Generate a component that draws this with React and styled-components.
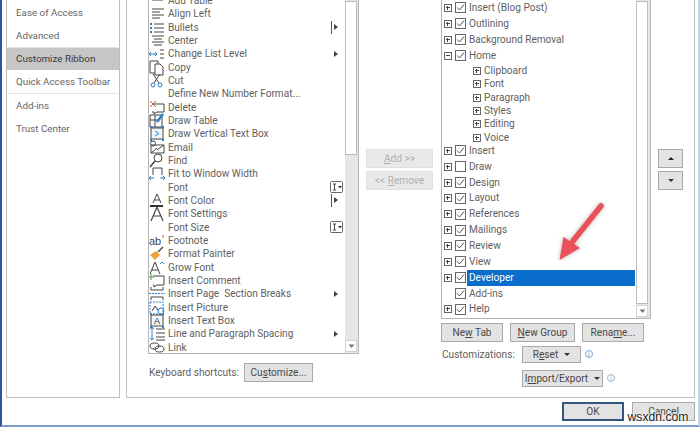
import React from 'react';
import styled, { createGlobalStyle } from 'styled-components';

const Global = createGlobalStyle`
  html, body { margin: 0; padding: 0; background: #fff; }
  * { box-sizing: border-box; }
`;

const Frame = styled.div`
  position: relative;
  width: 700px;
  height: 427px;
  overflow: hidden;
  background: #fff;
  border-left: 2px solid #2b579a;
  border-right: 2px solid #c5d6ea;
  border-bottom: 2px solid #7f9cc9;
  font-family: Roboto, "Open Sans", sans-serif;
  font-size: 10.1px;
  color: #5f5f5f;
  display: flex;
  flex-direction: column;
`;

const Body = styled.div`
  display: flex;
  gap: 6px;
  height: 399px;
  margin-top: -1px;
  padding-left: 4px;
  padding-right: 3px;
  flex: none;
`;

const Sidebar = styled.nav`
  width: 114px;
  flex: none;
  border: 1px solid #bdbdbd;
  display: flex;
  flex-direction: column;
  padding-top: 1px;
  font-size: 9.8px;
`;

const NavItem = styled.div`
  height: ${p => p.$h || 23}px;
  line-height: ${p => p.$h || 23}px;
  padding-left: 9px;
  background: ${p => (p.$active ? '#c6c6c6' : 'transparent')};
  color: ${p => (p.$active ? '#3a3a3a' : '#666')};
`;

const NavRule = styled.div`
  height: 1px;
  margin: 0 1px;
  background: #e4e4e4;
`;

const Main = styled.section`
  flex: 1;
  border: 1px solid #bdbdbd;
  display: flex;
  padding-left: 21px;
`;

const LeftCol = styled.div`
  width: 211px;
  flex: none;
  display: flex;
  flex-direction: column;
`;

const ListBox = styled.div`
  position: relative;
  border: 1px solid #b4b4b4;
  border-top: 0;
  display: flex;
  overflow: hidden;
  background: #fff;
  height: ${p => p.$h}px;
`;

const Rows = styled.div`
  flex: 1;
  min-width: 0;
  margin-top: ${p => p.$top}px;
`;

const CmdRow = styled.div`
  position: relative;
  height: 13.33px;
  line-height: 13.33px;
  padding-left: 19px;
  white-space: pre;
`;

const CmdIcon = styled.svg`
  position: absolute;
  left: 0;
  top: -1px;
  width: 16px;
  height: 15px;
  overflow: visible;
`;

const Marker = styled.span`
  position: absolute;
  right: 2px;
  top: 0;
  height: 13px;
  display: flex;
  align-items: center;
`;

const Scroll = styled.div`
  width: ${p => p.$w}px;
  flex: none;
  padding-top: 1px;
  padding-right: ${p => p.$w - 12}px;
  background: #e6e6e6;
  display: flex;
  flex-direction: column;
`;

const Thumb = styled.div`
  flex: ${p => (p.$grow ? 1 : 'none')};
  height: ${p => p.$h}px;
  background: #fff;
  border: 1px solid #bcbcbc;
`;

const ScrollFill = styled.div`
  flex: 1;
`;

const ScrollBtn = styled.div`
  height: 12px;
  margin: 1px 0;
  background: #fff;
  border: 1px solid #d2d2d2;
  display: flex;
  align-items: center;
  justify-content: center;
  flex: none;
`;

const KeyRow = styled.div`
  display: flex;
  align-items: center;
  margin-top: 9px;
`;

const KeyLabel = styled.span`
  width: 96px;
  padding-left: 1px;
  flex: none;
`;

const Btn = styled.div`
  height: ${p => p.$h || 19}px;
  width: ${p => p.$w}px;
  flex: none;
  background: ${p => (p.$disabled ? '#e9e9e9' : '#e3e3e3')};
  border-style: solid;
  border-color: ${p => (p.$disabled ? '#e0e0e0' : p.$primary ? '#33567f' : '#a9a9a9')};
  border-width: ${p => (p.$primary ? 2 : 1)}px;
  color: ${p => (p.$disabled ? '#b0b0b0' : '#484848')};
  display: flex;
  align-items: center;
  justify-content: center;
  gap: 6px;
  white-space: pre;
  u { text-underline-offset: 1px; }
`;

const MidCol = styled.div`
  width: 67px;
  margin-left: 7px;
  flex: none;
  padding-top: 149px;
  display: flex;
  flex-direction: column;
  gap: 3px;
`;

const RightCol = styled.div`
  width: 210px;
  margin-left: 8px;
  flex: none;
  display: flex;
  flex-direction: column;
`;

const TreeRow = styled.div`
  position: relative;
  height: ${p => (p.$sub ? 13.33 : 15.87)}px;
  margin-top: ${p => (p.$first ? 1 : 0)}px;
  margin-bottom: ${p => (p.$last ? -1.5 : 0)}px;
  display: flex;
  align-items: center;
  padding-left: ${p => (p.$sub ? 31 : 2)}px;
  gap: 3px;
`;

const Expander = styled.span`
  width: 8px;
  height: 8px;
  flex: none;
  border: 1px solid #666;
  position: relative;
  visibility: ${p => (p.$none ? 'hidden' : 'visible')};
  &::before {
    content: '';
    position: absolute;
    left: 1px; right: 1px; top: 2px; height: 1px;
    background: #444;
  }
  &::after {
    content: '';
    display: ${p => (p.$open ? 'none' : 'block')};
    position: absolute;
    top: 1px; bottom: 1px; left: 2px; width: 1px;
    background: #444;
  }
`;

const Check = styled.span`
  width: 11px;
  height: 11px;
  flex: none;
  border: 1px solid #666;
  background: #fff;
  display: flex;
  align-items: center;
  justify-content: center;
  position: relative;
  z-index: 1;
`;

const Label = styled.span`
  height: 16px;
  line-height: 16px;
  margin-left: -2px;
  padding-left: 2px;
  flex: ${p => (p.$sel ? 1 : 'none')};
  background: ${p => (p.$sel ? '#0a6ccb' : 'transparent')};
  color: ${p => (p.$sel ? '#fff' : 'inherit')};
  margin-right: ${p => (p.$sel ? 1 : 0)}px;
`;

const TabButtons = styled.div`
  display: flex;
  margin-top: 4px;
  gap: 7px;
`;

const CustomRow = styled.div`
  display: flex;
  align-items: center;
  height: 17px;
  margin-top: ${p => p.$mt}px;
`;

const CustomLabel = styled.span`
  width: 81px;
  padding-left: 1px;
  flex: none;
`;

const InfoIcon = styled.svg`
  width: 8px;
  height: 8px;
  margin-left: 4px;
  margin-top: -1px;
  flex: none;
`;

const Caret = styled.span`
  width: 0;
  height: 0;
  border-left: 3px solid transparent;
  border-right: 3px solid transparent;
  border-top: 3px solid #333;
`;

const UpTri = styled.span`
  width: 0;
  height: 0;
  border-left: 3px solid transparent;
  border-right: 3px solid transparent;
  border-bottom: 3px solid #222;
`;

const Side = styled.div`
  margin-left: 7px;
  width: 25px;
  flex: none;
  padding-top: 149px;
  display: flex;
  flex-direction: column;
  gap: 3px;
`;

const Footer = styled.footer`
  display: flex;
  justify-content: flex-end;
  gap: 8px;
  padding-right: 3px;
  margin-top: 4px;
`;

const Watermark = styled.span`
  position: absolute;
  left: 625.5px;
  top: 409px;
  font-family: "Liberation Sans", sans-serif;
  font-size: 12.2px;
  line-height: 16px;
  color: #1c1c1c;
  text-shadow: 0 0 2px #fff, 0 0 2px #fff, 0 0 3px #fff;
`;

const Arrow = styled.svg`
  position: absolute;
  left: 548px;
  top: 195px;
  width: 60px;
  height: 72px;
  pointer-events: none;
  overflow: visible;
  filter: drop-shadow(0 0 2px rgba(0, 0, 0, 0.3));
`;

const blue = '#2f7fc9';
const d = '#444';
const icons = {
  table: <g stroke={d} fill="none"><path d="M3 -3h11v10H3zM3 3h11M7 -3v10M10.500 -3v10" /></g>,
  left: <g stroke={d}><path d="M3 3h12M3 6h8M3 9h12M3 12h8" /></g>,
  bullets: <g stroke={d}><path d="M5 4h10M5 8h10M5 12h10" /><path stroke={blue} strokeWidth="2" d="M1 4h2M1 8h2M1 12h2" /></g>,
  center: <g stroke={d}><path d="M3 3h12M5 6h8M3 9h12M5 12h8" /></g>,
  level: <g><path stroke={d} d="M11 8h4M11 4h4M11 12h4" /><path stroke={blue} fill="none" d="M0 8h8M2 6l-2 2 2 2M6 6l2 2-2 2" /></g>,
  copy: <g stroke={d} fill="#fff"><path d="M1 1h8v12H1z" /><path d="M6 4h5l3 3v8H6z" /></g>,
  cut: <g fill="none"><path stroke={d} d="M4 1l6 9M11 1l-6 9" /><circle cx="4" cy="12" r="2" stroke={blue} /><circle cx="11" cy="12" r="2" stroke={blue} /></g>,
  del: <g fill="none"><path stroke={d} d="M3 4h12v8H8l-3 2v-2H3" /><path stroke="#e0504a" d="M1 1l6 6M7 1l-6 6" /></g>,
  drawTable: <g fill="none"><path stroke={d} d="M1 2h12v12H1zM1 7h8M6 2v12" /><path stroke={blue} strokeWidth="2.500" d="M8 9l6-8" /></g>,
  vert: <g fill="none"><path stroke={d} d="M2 2h12v11H2z" fill="#eef5fb" /><path stroke={blue} d="M6 5l4 2.500-4 2.500" /><path stroke={blue} strokeWidth="2" d="M1 1h2M13 1h2M1 14h2M13 14h2" /></g>,
  email: <g fill="none" stroke={d}><path d="M2 5h13v8H2zM2 13l6-5M15 5l-7 5" /><circle cx="4" cy="3.500" r="2.500" /></g>,
  find: <g fill="none" stroke={d}><circle cx="9" cy="5" r="4" /><path strokeWidth="1.500" d="M6 8l-5 6" /></g>,
  fit: <g fill="none"><path stroke={d} d="M4 9V2h9v7" /><path stroke={blue} d="M0 12h5M2 10l-2 2 2 2M11 12h5M14 10l2 2-2 2" /></g>,
  fontColor: <g><path stroke={d} fill="none" d="M4 10l4-9 4 9M5.500 7h5" /><path stroke="#333" strokeWidth="2" d="M1 13h13" /></g>,
  fontSet: <g><path stroke={d} strokeWidth="1.200" fill="none" d="M2 15L8 1l6 14M4 10h8" /></g>,
  ab: <g><text x="0" y="12" fontSize="11" fontFamily="Liberation Sans" fill="#444">ab</text><path stroke="#d9534f" d="M14 2v3" /></g>,
  painter: <g><path fill="#eba33e" d="M1 9l6-4 4 4-5 5z" /><path stroke={d} strokeWidth="1.500" d="M9 6l5-5" /></g>,
  grow: <g><path stroke={d} fill="none" d="M1 14L6 2l5 12M3 10h6" /><path stroke={blue} fill="none" d="M11 4l2-2 2 2" /></g>,
  comment: <g fill="none"><path stroke={d} d="M4 3h11v9H8l-3 2v-2H4" /><path stroke="#4a9a4a" d="M2 1v6M-1 4h6" /></g>,
  page: <g fill="none"><path stroke={d} d="M2 1v3h12V1M2 14v-3h12v3" /><path stroke={blue} strokeDasharray="2 1" d="M0 7.500h16" /></g>,
  picture: <g fill="none"><path stroke={blue} strokeDasharray="2 1" d="M1 2h13v12H1z" /><path stroke={d} d="M3 11l3-5 3 4" /><circle cx="12" cy="11" r="3" stroke={blue} /></g>,
  textBox: <g fill="none"><path stroke={d} d="M2 2h12v11H2z" fill="#eef5fb" /><text x="5" y="11" fontSize="9" fontFamily="Liberation Sans" fill="#333">A</text><path stroke={blue} strokeWidth="2" d="M1 1h2M13 1h2M1 14h2M13 14h2" /></g>,
  spacing: <g fill="none"><path stroke={d} d="M7 3h9M7 7h9M7 11h9M7 14h9" /><path stroke={blue} d="M3 1v13M1 3l2-2 2 2M1 12l2 2 2-2" /></g>,
  link: <g fill="none" stroke={d}><ellipse cx="5.500" cy="6" rx="4.500" ry="3" /><ellipse cx="10.500" cy="9" rx="4.500" ry="3" /></g>,
};

const commands = [
  ['Add Table', 'table'], ['Align Left', 'left'], ['Bullets', 'bullets', 'bar'], ['Center', 'center'],
  ['Change List Level', 'level', 'tri'], ['Copy', 'copy'], ['Cut', 'cut'], ['Define New Number Format...'],
  ['Delete', 'del'], ['Draw Table', 'drawTable'], ['Draw Vertical Text Box', 'vert'], ['Email', 'email'],
  ['Find', 'find'], ['Fit to Window Width', 'fit'], ['Font', null, 'combo'], ['Font Color', 'fontColor', 'bar'],
  ['Font Settings', 'fontSet'], ['Font Size', null, 'combo'], ['Footnote', 'ab'], ['Format Painter', 'painter'],
  ['Grow Font', 'grow'], ['Insert Comment', 'comment'], ['Insert Page  Section Breaks', 'page', 'tri'],
  ['Insert Picture', 'picture'], ['Insert Text Box', 'textBox'], ['Line and Paragraph Spacing', 'spacing', 'tri'], ['Link', 'link'],
];

const Combo = () => (
  <svg width="13" height="12" viewBox="0 0 13 12">
    <rect x="0.500" y="0.500" width="12" height="11" rx="1" fill="#fff" stroke="#666" />
    <path d="M3 3h3M3 9h3M4.500 3v6" stroke="#444" fill="none" />
    <path d="M8 5h4l-2 2.500z" fill="#333" />
  </svg>
);
const Tri = () => (
  <svg width="13" height="12" viewBox="0 0 13 12"><path d="M4 3l4 3-4 3z" fill="#444" /></svg>
);
const BarTri = () => (
  <svg width="13" height="13" viewBox="0 0 13 13"><path d="M1.500 0v13" stroke="#555" /><path d="M4 3l4 3-4 3z" fill="#444" /></svg>
);
const Tick = () => (
  <svg width="9" height="9" viewBox="0 0 9 9"><path d="M1 4.500l2.500 2.500L8 1.500" fill="none" stroke="#555" /></svg>
);
const Down = () => (
  <svg width="7" height="5" viewBox="0 0 7 5"><path d="M0.500 0.500h6L3.500 4z" fill="#777" /></svg>
);
const Info = ({ color }) => (
  <InfoIcon viewBox="0 0 8 8">
    <circle cx="4" cy="4" r="3.500" fill="none" stroke={color} />
    <path d="M4 3.500v3M4 1.500v1" stroke={color} />
  </InfoIcon>
);

const tree = [
  ['Insert (Blog Post)'], ['Outlining'], ['Background Removal'], ['Home', { open: true }],
  ['Clipboard', { sub: true, first: true }], ['Font', { sub: true }], ['Paragraph', { sub: true }], ['Styles', { sub: true }],
  ['Editing', { sub: true }], ['Voice', { sub: true, last: true }], ['Insert'], ['Draw', { off: true }], ['Design'], ['Layout'],
  ['References'], ['Mailings'], ['Review'], ['View'], ['Developer', { sel: true }], ['Add-ins', { none: true }], ['Help'],
];

export default function App() {
  return (
    <>
      <Global />
      <Frame>
        <Body>
          <Sidebar>
            <NavItem>Ease of Access</NavItem>
            <NavItem>Advanced</NavItem>
            <NavRule />
            <NavItem $active $h={22}>Customize Ribbon</NavItem>
            <NavItem>Quick Access Toolbar</NavItem>
            <NavRule />
            <NavItem>Add-ins</NavItem>
            <NavItem>Trust Center</NavItem>
          </Sidebar>
          <Main>
            <LeftCol>
              <ListBox $h={354}>
                <Rows $top={-6}>
                  {commands.map(([t, ic, m]) => (
                    <CmdRow key={t}>
                      {ic && <CmdIcon viewBox="0 0 16 15">{icons[ic]}</CmdIcon>}
                      {t}
                      {m && (
                        <Marker>
                          {m === 'combo' ? <Combo /> : m === 'tri' ? <Tri /> : <BarTri />}
                        </Marker>
                      )}
                    </CmdRow>
                  ))}
                </Rows>
                <Scroll $w={13}>
                  <Thumb $h={154} />
                  <ScrollFill />
                  <ScrollBtn><Down /></ScrollBtn>
                </Scroll>
              </ListBox>
              <KeyRow>
                <KeyLabel>Keyboard shortcuts:</KeyLabel>
                <Btn $w={69}><span>Cu<u>s</u>tomize...</span></Btn>
              </KeyRow>
            </LeftCol>
            <MidCol>
              <Btn $disabled $w={67}><span><u>A</u>dd &gt;&gt;</span></Btn>
              <Btn $disabled $w={67}><span>&lt;&lt; <u>R</u>emove</span></Btn>
            </MidCol>
            <RightCol>
              <ListBox $h={319}>
                <Rows $top={0}>
                  {tree.map(([t, o = {}]) => (
                    <TreeRow key={t + (o.sub ? 's' : '')} $sub={o.sub} $first={o.first} $last={o.last}>
                      <Expander $open={o.open} $none={o.none} />
                      {!o.sub && <Check>{!o.off && <Tick />}</Check>}
                      <Label $sel={o.sel}>{t}</Label>
                    </TreeRow>
                  ))}
                </Rows>
                <Scroll $w={14}>
                  <Thumb $grow />
                  <ScrollBtn><Down /></ScrollBtn>
                </Scroll>
              </ListBox>
              <TabButtons>
                <Btn $w={62}><span>Ne<u>w</u> Tab</span></Btn>
                <Btn $w={65}><span><u>N</u>ew Group</span></Btn>
                <Btn $w={62}><span>Rena<u>m</u>e...</span></Btn>
              </TabButtons>
              <CustomRow $mt={4}>
                <CustomLabel>Customizations:</CustomLabel>
                <Btn $w={59} $h={17}><span>R<u>e</u>set</span><Caret /></Btn>
                <Info color="#7ba6d3" />
              </CustomRow>
              <CustomRow $mt={7}>
                <CustomLabel />
                <Btn $w={81} $h={17}><span>I<u>m</u>port/Export</span><Caret /></Btn>
                <Info color="#9db4c8" />
              </CustomRow>
            </RightCol>
            <Side>
              <Btn $w={25}><UpTri /></Btn>
              <Btn $w={25}><Caret /></Btn>
            </Side>
          </Main>
        </Body>
        <Footer>
          <Btn $primary $w={62} $h={19}>OK</Btn>
          <Btn $w={63} $h={19}>Cancel</Btn>
        </Footer>
        <Arrow viewBox="550 195 60 72">
          <path d="M601 206L573 241" stroke="#e9505a" strokeWidth="5.500" strokeLinecap="round" fill="none" />
          <path d="M559.500 260L563.500 237L580 248z" fill="#e9505a" />
        </Arrow>
        <Watermark>wsxdn.com</Watermark>
      </Frame>
    </>
  );
}
